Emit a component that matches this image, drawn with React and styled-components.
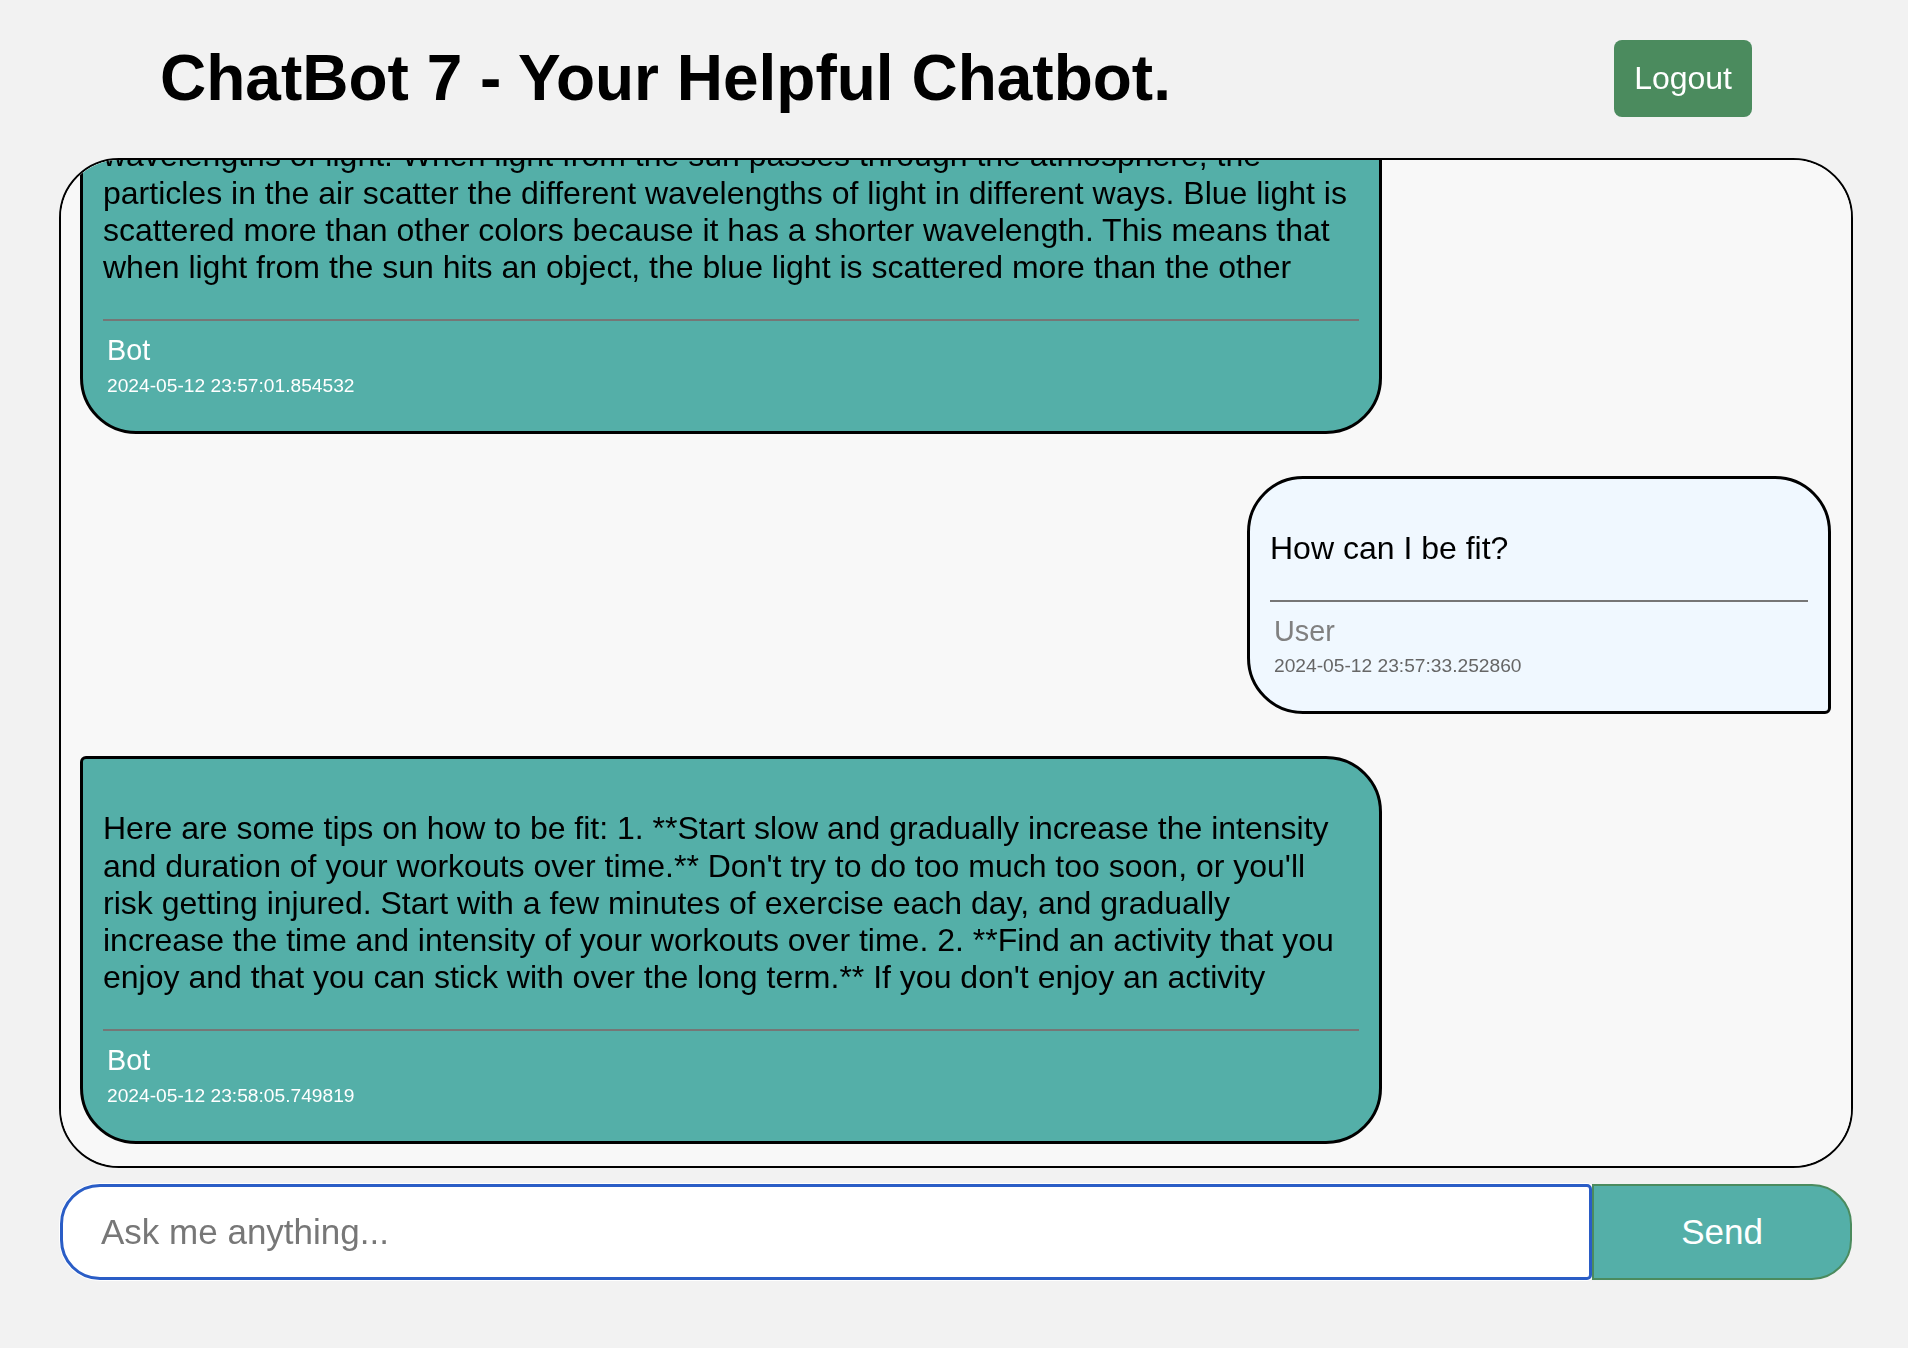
import React, { useLayoutEffect, useRef } from 'react';
import styled, { createGlobalStyle } from 'styled-components';

const GlobalStyle = createGlobalStyle`
  html, body { margin: 0; padding: 0; background: #f2f2f2; }
  body { font-family: "Liberation Sans", Arial, sans-serif; color: #000; }
  * { box-sizing: border-box; }
`;

const Page = styled.div`
  min-height: 1348px;
  background: #f2f2f2;
`;

const Header = styled.header`
  height: 158px;
  padding: 0 156px 0 160px;
  display: flex;
  align-items: center;
  justify-content: space-between;
`;

const Title = styled.h1`
  margin: 0 0 2px;
  font-size: 64px;
  font-weight: 700;
`;

const LogoutButton = styled.button`
  margin-bottom: 2px;
  padding: 20px;
  border: none;
  border-radius: 8px;
  background: #4b8b5e;
  color: #fff;
  font-family: inherit;
  font-size: 32px;
  line-height: 37px;
  cursor: pointer;
`;

const Main = styled.main`
  width: 1794px;
  margin-left: 59px;
`;

const ChatBox = styled.div`
  height: 1010px;
  border: 2px solid #000;
  border-radius: 60px;
  background: #f8f8f8;
  padding: 20px 20px 22px 19px;
  display: flex;
  flex-direction: column;
  gap: 42px;
  overflow-y: auto;
  scrollbar-width: none;
  &::-webkit-scrollbar { display: none; }
`;

const Bubble = styled.div`
  flex-shrink: 0;
  width: ${p => p.$width};
  align-self: ${p => (p.$user ? 'flex-end' : 'flex-start')};
  border: 3px solid #000;
  border-radius: ${p => (p.$user ? '56px 56px 6px 56px' : '6px 56px 56px 56px')};
  background: ${p => (p.$user ? '#f0f8ff' : '#54afa8')};
  padding: 19px 20px 34px;
`;

const Text = styled.p`
  margin: 32px 0 33px;
  font-size: 32px;
  line-height: 37.2px;
`;

const Divider = styled.div`
  height: 2px;
  background: #767676;
`;

const Meta = styled.div`
  padding: 13px 4px 0;
  color: ${p => (p.$user ? '#808080' : '#fff')};
`;

const Sender = styled.div`
  font-size: 28.8px;
  line-height: 33px;
`;

const Time = styled.div`
  margin-top: 7.5px;
  font-size: 19.2px;
  line-height: 22px;
  color: ${p => (p.$user ? '#666' : '#fff')};
`;

const Composer = styled.form`
  margin-top: 16px;
  padding: 0 1px;
  display: flex;
  height: 96px;
`;

const Input = styled.input`
  flex: 1;
  height: 100%;
  border: 3px solid #2a5dc6;
  border-radius: 40px 5px 5px 40px;
  box-shadow: 0 0 0 1px #fff;
  outline: none;
  background: #fff;
  padding: 0 38px;
  font-family: inherit;
  font-size: 35px;
  &::placeholder { color: #777; }
`;

const SendButton = styled.button`
  width: 260px;
  height: 100%;
  border: 2px solid #4b8b5e;
  border-radius: 0 40px 40px 0;
  background: #54afa8;
  color: #fff;
  font-family: inherit;
  font-size: 35px;
  cursor: pointer;
`;

const messages = [
  {
    sender: 'User',
    text: 'Why is the sky blue?',
    time: '2024-05-12 23:56:58.412907',
  },
  {
    sender: 'Bot',
    text: 'The sky is blue because of a phenomenon called Rayleigh scattering. Rayleigh scattering is the scattering of light by particles that are much smaller than the wavelength of light. The particles in the atmosphere are much smaller than the wavelengths of light. When light from the sun passes through the atmosphere, the particles in the air scatter the different wavelengths of light in different ways. Blue light is scattered more than other colors because it has a shorter wavelength. This means that when light from the sun hits an object, the blue light is scattered more than the other',
    time: '2024-05-12 23:57:01.854532',
  },
  {
    sender: 'User',
    text: 'How can I be fit?',
    time: '2024-05-12 23:57:33.252860',
  },
  {
    sender: 'Bot',
    text: "Here are some tips on how to be fit: 1. **Start slow and gradually increase the intensity and duration of your workouts over time.** Don't try to do too much too soon, or you'll risk getting injured. Start with a few minutes of exercise each day, and gradually increase the time and intensity of your workouts over time. 2. **Find an activity that you enjoy and that you can stick with over the long term.** If you don't enjoy an activity",
    time: '2024-05-12 23:58:05.749819',
  },
];

const Message = ({ sender, text, time }) => {
  const user = sender === 'User';
  return (
    <Bubble $user={user} $width={user ? '584px' : '1302px'}>
      <Text>{text}</Text>
      <Divider />
      <Meta $user={user}>
        <Sender>{sender}</Sender>
        <Time $user={user}>{time}</Time>
      </Meta>
    </Bubble>
  );
};

const App = () => {
  const chatRef = useRef(null);

  // keep the newest message in view
  useLayoutEffect(() => {
    const el = chatRef.current;
    if (el) el.scrollTop = el.scrollHeight;
  }, []);

  return (
    <Page>
      <GlobalStyle />
      <Header>
        <Title>ChatBot 7 - Your Helpful Chatbot.</Title>
        <LogoutButton type="button">Logout</LogoutButton>
      </Header>

      <Main>
        <ChatBox ref={chatRef}>
          {messages.map(m => (
            <Message key={m.time} {...m} />
          ))}
        </ChatBox>

        <Composer onSubmit={e => e.preventDefault()}>
          <Input type="text" placeholder="Ask me anything..." />
          <SendButton type="submit">Send</SendButton>
        </Composer>
      </Main>
    </Page>
  );
};

export default App;
